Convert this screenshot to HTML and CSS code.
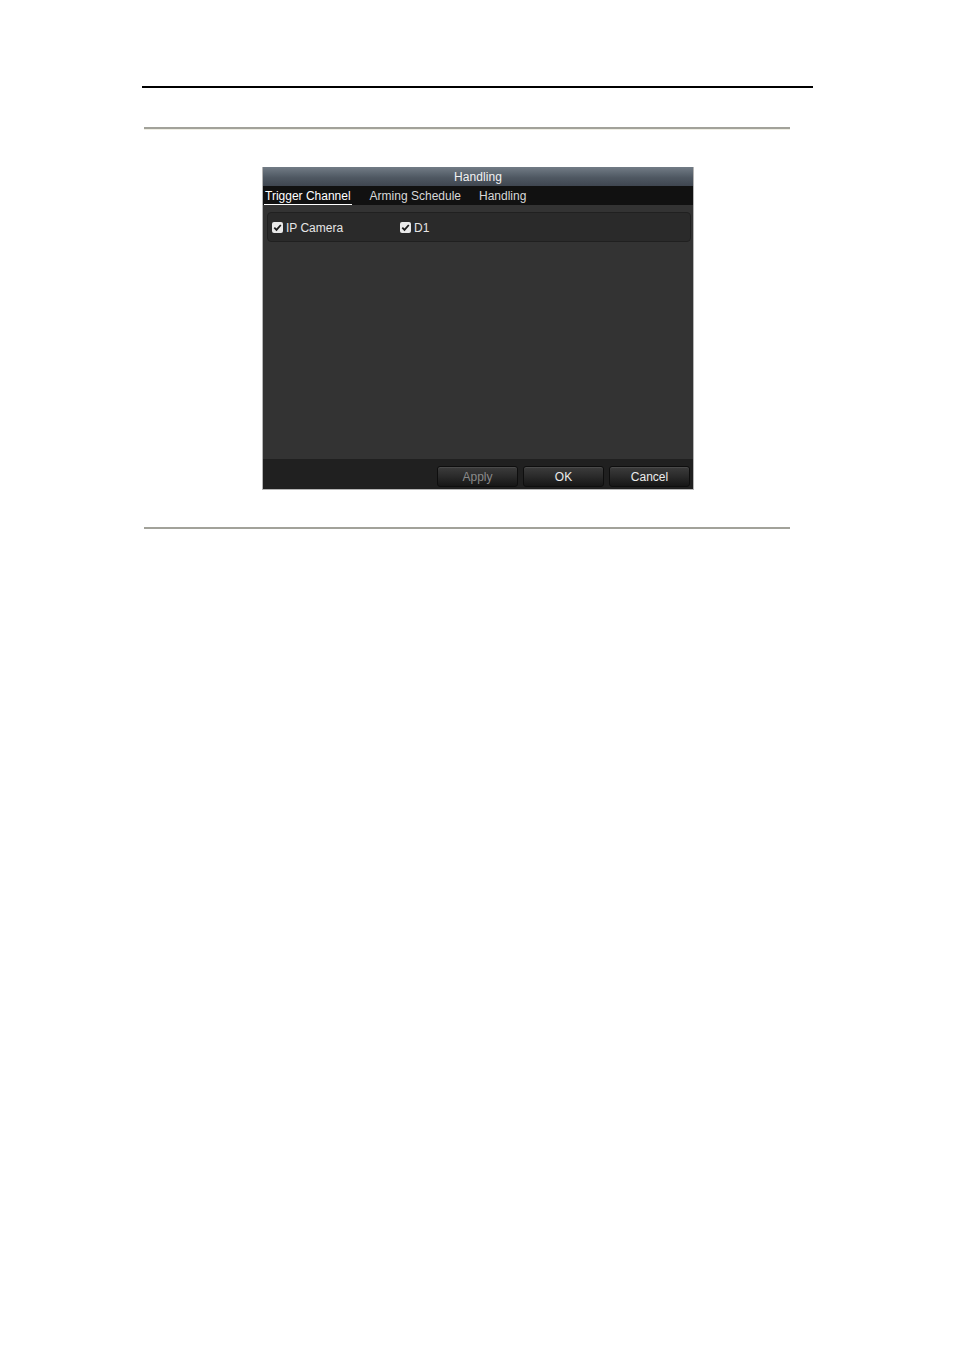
FILE: index.html
```html
<!DOCTYPE html>
<html>
<head>
<meta charset="utf-8">
<link rel="stylesheet" href="styles.css">
</head>
<body>
<div class="page">
  <div class="rule-black"></div>
  <div class="rule-gray top"></div>
  <div class="dialog">
    <div class="title">Handling</div>
    <div class="tabs">
      <span class="tab active">Trigger Channel</span>
      <span class="tab">Arming Schedule</span>
      <span class="tab">Handling</span>
    </div>
    <div class="content">
      <div class="group">
        <label class="check c1"><span class="box"><svg viewBox="0 0 11 11" width="11" height="11"><path d="M2.3 5.6 L4.5 7.9 L8.8 3.0" fill="none" stroke="#1a1a1a" stroke-width="1.8"/></svg></span>IP Camera</label>
        <label class="check c2"><span class="box"><svg viewBox="0 0 11 11" width="11" height="11"><path d="M2.3 5.6 L4.5 7.9 L8.8 3.0" fill="none" stroke="#1a1a1a" stroke-width="1.8"/></svg></span>D1</label>
      </div>
    </div>
    <div class="footer">
      <button class="btn disabled">Apply</button>
      <button class="btn">OK</button>
      <button class="btn">Cancel</button>
    </div>
  </div>
  <div class="rule-gray bottom"></div>
</div>
</body>
</html>
```

FILE: styles.css
```css
html, body {
  margin: 0;
  padding: 0;
  background: #ffffff;
}
.page {
  padding-top: 86px;
  font-family: "Liberation Sans", Arial, sans-serif;
}
.rule-black {
  margin-left: 142px;
  width: 671px;
  height: 2px;
  background: #000;
}
.rule-gray {
  margin-left: 144px;
  width: 646px;
  height: 2px;
  background: #a2a29a;
  box-shadow: 0 1px 0 #efeee4;
}
.rule-gray.top {
  margin-top: 39px;
}
.rule-gray.bottom {
  margin-top: 37px;
}
.dialog {
  margin-top: 38px;
  margin-left: 262px;
  width: 432px;
  box-sizing: border-box;
  border: 1px solid #b5b5b5;
  border-top: none;
  background: #333;
}
.title {
  height: 19px;
  line-height: 21px;
  text-align: center;
  color: #f2f2f2;
  font-size: 12px;
  letter-spacing: 0.1px;
  background: linear-gradient(#727c86, #4f5862 55%, #3f4650);
}
.tabs {
  height: 19px;
  box-sizing: border-box;
  padding-top: 2px;
  background: #111;
  display: flex;
  align-items: center;
  gap: 18px;
  padding-left: 2px;
  font-size: 12px;
  color: #d8d8d8;
}
.tab {
  line-height: 15px;
}
.tab.active {
  color: #fff;
  border-bottom: 1px solid #fff;
  padding: 0 1px;
  margin-left: -1px;
}
.content {
  height: 254px;
  box-sizing: border-box;
  padding: 7px 2px 0 4px;
  background: #333;
}
.group {
  height: 30px;
  box-sizing: border-box;
  border: 1px solid #202020;
  border-radius: 4px;
  background: #2a2a2a;
  display: flex;
  align-items: center;
  padding-left: 4px;
  padding-top: 1px;
}
.check {
  display: flex;
  align-items: center;
  color: #e6e6e6;
  font-size: 12px;
}
.check.c1 {
  width: 128px;
}
.box {
  width: 11px;
  height: 11px;
  border-radius: 2px;
  background: #e9e9e9;
  margin-right: 3px;
  display: block;
}
.box svg {
  display: block;
}
.footer {
  height: 30px;
  background: #202020;
  display: flex;
  justify-content: flex-end;
  align-items: center;
  gap: 5px;
  padding-right: 3px;
  padding-top: 5px;
  box-sizing: border-box;
}
.btn {
  width: 81px;
  height: 21px;
  border: 1px solid #0e0e0e;
  border-radius: 3px;
  background: linear-gradient(#3c3c3c, #2a2a2a 50%, #161616);
  box-shadow: inset 0 1px 0 #4a4a4a;
  color: #ececec;
  font-family: "Liberation Sans", Arial, sans-serif;
  font-size: 12px;
  padding: 1px 0 0 0;
  margin-top: 0;
}
.btn.disabled {
  color: #8a8a8a;
}
```
